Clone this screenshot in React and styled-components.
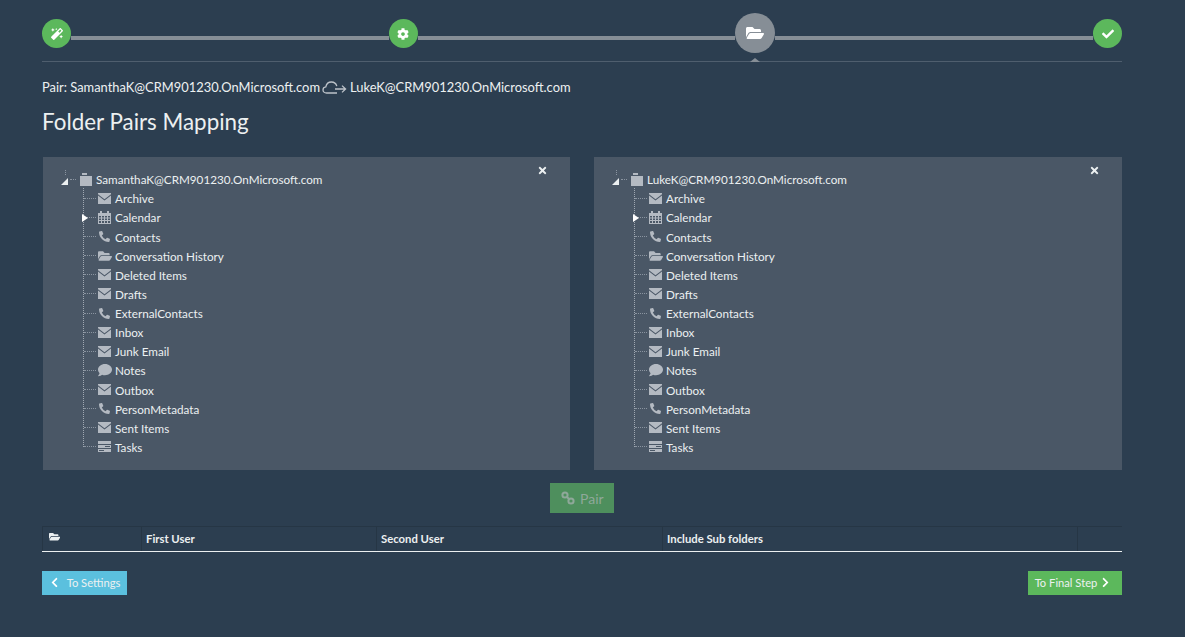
import styled, { createGlobalStyle } from "styled-components";
import {
  FaMagic,
  FaCog,
  FaFolderOpen,
  FaCheck,
  FaTimes,
  FaPhoneAlt,
  FaComment,
  FaChevronLeft,
  FaChevronRight,
} from "react-icons/fa";

const GlobalStyle = createGlobalStyle`
  html, body {
    margin: 0;
    padding: 0;
    background: #2c3e50;
    color: #ecf0f1;
    font-family: Lato, "Open Sans", sans-serif;
    font-size: 13px;
  }
`;

const Page = styled.div`
  width: 1080px;
  height: 637px;
  margin-left: 42px;
  overflow: hidden;
`;

const Wizard = styled.div`
  display: flex;
  align-items: flex-start;
  height: 48px;
  padding-top: 13px;
  border-bottom: 1px solid #4f5e6e;
`;

const Step = styled.div`
  width: ${(p) => (p.$active ? 40 : 29)}px;
  height: ${(p) => (p.$active ? 40 : 29)}px;
  margin-top: ${(p) => (p.$active ? 0 : 6)}px;
  flex-shrink: 0;
  border-radius: 50%;
  background: ${(p) => (p.$active ? "#868e96" : "#5cb85c")};
  color: #fff;
  font-size: ${(p) => (p.$active ? 18 : 12)}px;
  display: flex;
  align-items: center;
  justify-content: center;
  position: relative;

  ${(p) =>
    p.$active &&
    `
    &::after {
      content: "";
      position: absolute;
      left: 15px;
      top: 45px;
      border: 5px solid transparent;
      border-top: 0;
      border-bottom: 4px solid #868e96;
    }
  `}
`;

const Connector = styled.div`
  flex: 1;
  height: 4px;
  margin-top: 23px;
  background: #868e96;
`;

const PairLine = styled.div`
  display: flex;
  align-items: center;
  height: 20px;
  margin-top: 15px;
  font-size: 12.9px;
  color: #ecf0f1;
`;

const CloudIcon = styled.svg`
  width: 25px;
  height: 16px;
  margin: 2px 3px 0 2px;
`;

const Heading = styled.h2`
  margin: 12px 0 0;
  font-size: 22.4px;
  line-height: 26px;
  font-weight: 400;
  color: #ecf0f1;
`;

const Panels = styled.div`
  display: grid;
  grid-template-columns: 527px 528px;
  gap: 24px;
  margin: 22px 0 0 1px;
`;

const Panel = styled.div`
  height: 313px;
  box-sizing: border-box;
  padding: 12.7px 0 0 17px;
  background: #4a5766;
  position: relative;
`;

const CloseButton = styled.span`
  position: absolute;
  top: 8px;
  right: 22px;
  color: #ecf0f1;
  font-size: 11px;
`;

const RootRow = styled.div`
  display: flex;
  align-items: center;
  height: 19px;
  position: relative;
`;

const RootToggle = styled.span`
  width: 0;
  height: 0;
  margin: 4px 2px 0 1px;
  border-left: 7px solid transparent;
  border-bottom: 7px solid #ecf0f1;

  &::before {
    content: "";
    position: absolute;
    left: 5px;
    top: 0;
    height: 5px;
    border-left: 1px dotted #8a94a0;
  }
`;

const Dash = styled.span`
  width: ${(p) => p.$w}px;
  flex-shrink: 0;
  border-top: 1px dotted #8a94a0;
`;

const RootIcon = styled.span`
  display: flex;
  margin: 0 4px 0 3px;
`;

const List = styled.ul`
  list-style: none;
  margin: 0 0 0 23px;
  padding: 0;
  position: relative;

  &::before {
    content: "";
    position: absolute;
    left: 0;
    top: -1px;
    bottom: 9px;
    border-left: 1px dotted #a0a8b2;
  }
`;

const Row = styled.li`
  display: flex;
  align-items: center;
  height: 19.14px;
  padding-left: 1px;
  position: relative;
`;

const Expander = styled.span`
  position: absolute;
  left: -1px;
  top: 6px;
  border-left: 6px solid #fff;
  border-top: 4px solid transparent;
  border-bottom: 4px solid transparent;
`;

const RowIcon = styled.span`
  width: 15px;
  margin: 0 3px 0 1px;
  display: flex;
  justify-content: center;
  color: #b4bac2;
  font-size: ${(p) => p.$size || 13}px;
`;

const Label = styled.span`
  font-size: 11.7px;
  white-space: nowrap;
  color: #ecf0f1;
`;

const PairRow = styled.div`
  display: flex;
  justify-content: center;
  margin-top: 13px;
`;

const PairButton = styled.button`
  display: flex;
  align-items: center;
  gap: 5px;
  height: 30px;
  width: 64px;
  padding: 0 0 0 11px;
  border: 0;
  background: #4e8f5d;
  color: #8fa89a;
  font: 14px Lato, sans-serif;
`;

const Table = styled.table`
  width: 100%;
  margin-top: 13px;
  border-collapse: collapse;
  table-layout: fixed;
`;

const Th = styled.th`
  width: ${(p) => p.$w}px;
  height: 25px;
  padding: 0 0 2px ${(p) => p.$pad || 4}px;
  box-sizing: border-box;
  border: 1px solid #263645;
  border-bottom: 1px solid #ecf0f1;
  text-align: left;
  font-size: 11.3px;
  font-weight: 700;
  color: #ecf0f1;
`;

const Footer = styled.div`
  display: flex;
  justify-content: space-between;
  margin-top: 19px;
`;

const NavButton = styled.button`
  display: flex;
  align-items: center;
  justify-content: center;
  gap: ${(p) => p.$gap}px;
  height: 24px;
  padding: 0 ${(p) => p.$right || 0}px 2px 0;
  width: ${(p) => p.$w}px;
  border: 0;
  background: ${(p) => p.$bg};
  color: #ecf0f1;
  font: 11.2px Lato, sans-serif;

  svg {
    font-size: 11px;
    color: #fff;
  }
`;

// the panel icons are not in the packages in this shape, so they are drawn here
const EnvelopeIcon = () => (
  <svg width="13" height="11" viewBox="0 0 13 11" fill="currentColor">
    <path d="M0 0h13v1.2L6.5 6.2 0 1.2z" />
    <path d="M0 2.6l6.5 5 6.5-5V11H0z" />
  </svg>
);

const CalendarIcon = () => (
  <svg width="13" height="13" viewBox="0 0 13 13" fill="currentColor" fillRule="evenodd">
    <path d="M2 0h2v2h5V0h2v2h2v11H0V2h2zM1 5v1.5h2V5zm3 0v1.5h2V5zm3 0v1.5h2V5zm3 0v1.5h2V5zM1 7.5V9h2V7.5zm3 0V9h2V7.5zm3 0V9h2V7.5zm3 0V9h2V7.5zM1 10v2h2v-2zm3 0v2h2v-2zm3 0v2h2v-2zm3 0v2h2v-2z" />
  </svg>
);

const TasksIcon = () => (
  <svg width="13" height="11" viewBox="0 0 13 11" fill="currentColor" fillRule="evenodd">
    <path d="M0 0h13v3H0zM0 4h13v3H0zm7 1v1h5V5zM0 8h13v3H0zm1 1v1h5V9z" />
  </svg>
);

const FolderIcon = () => (
  <svg width="13" height="13" viewBox="0 0 13 13" fill="#b4bac2">
    <path d="M3 0h5v2H3z" />
    <path d="M1 3h12v10H1z" />
  </svg>
);

const ChainIcon = () => (
  <svg width="14" height="16" viewBox="0 0 14 16" fill="none" stroke="#8fa89a" strokeWidth="2">
    <circle cx="4" cy="5" r="2.6" />
    <circle cx="10" cy="11" r="2.6" />
    <path d="M6 7l2 2" />
  </svg>
);

const CloudArrow = () => (
  <CloudIcon viewBox="0 0 25 16" fill="none" stroke="#bcc2c9" strokeWidth="1.3">
    <path d="M15 13H4.5C2.5 13 1 11.6 1 9.9 1 8.3 2.2 7.1 3.8 6.9 4.4 4 6.6 2 9.4 2c2.6 0 4.7 1.6 5.4 4.1" />
    <path d="M13 9h10M20 5.6 23.6 9 20 12.4" />
  </CloudIcon>
);

const folders = [
  ["Archive", EnvelopeIcon],
  ["Calendar", CalendarIcon, true],
  ["Contacts", FaPhoneAlt],
  ["Conversation History", FaFolderOpen],
  ["Deleted Items", EnvelopeIcon],
  ["Drafts", EnvelopeIcon],
  ["ExternalContacts", FaPhoneAlt],
  ["Inbox", EnvelopeIcon],
  ["Junk Email", EnvelopeIcon],
  ["Notes", FaComment],
  ["Outbox", EnvelopeIcon],
  ["PersonMetadata", FaPhoneAlt],
  ["Sent Items", EnvelopeIcon],
  ["Tasks", TasksIcon],
];

function FolderTree({ user }) {
  return (
    <Panel>
      <CloseButton>
        <FaTimes />
      </CloseButton>
      <RootRow>
        <RootToggle />
        <Dash $w={6} />
        <RootIcon>
          <FolderIcon />
        </RootIcon>
        <Label>{user}</Label>
      </RootRow>
      <List>
        {folders.map(([name, Icon, expandable]) => (
          <Row key={name}>
            {expandable && <Expander />}
            <Dash $w={12} />
            <RowIcon $size={Icon === FaPhoneAlt ? 11 : 14}>
              <Icon />
            </RowIcon>
            <Label>{name}</Label>
          </Row>
        ))}
      </List>
    </Panel>
  );
}

export default function App() {
  return (
    <>
      <GlobalStyle />
      <Page>
        <Wizard>
          <Step><FaMagic /></Step>
          <Connector />
          <Step><FaCog /></Step>
          <Connector />
          <Step $active><FaFolderOpen /></Step>
          <Connector />
          <Step><FaCheck /></Step>
        </Wizard>

        <PairLine>
          Pair: SamanthaK@CRM901230.OnMicrosoft.com
          <CloudArrow />
          LukeK@CRM901230.OnMicrosoft.com
        </PairLine>
        <Heading>Folder Pairs Mapping</Heading>

        <Panels>
          <FolderTree user="SamanthaK@CRM901230.OnMicrosoft.com" />
          <FolderTree user="LukeK@CRM901230.OnMicrosoft.com" />
        </Panels>

        <PairRow>
          <PairButton disabled>
            <ChainIcon />
            Pair
          </PairButton>
        </PairRow>

        <Table>
          <thead>
            <tr>
              <Th $w={99} $pad={6}><FaFolderOpen /></Th>
              <Th $w={235}>First User</Th>
              <Th $w={286}>Second User</Th>
              <Th $w={415}>Include Sub folders</Th>
              <Th $w={45} />
            </tr>
          </thead>
        </Table>

        <Footer>
          <NavButton $w={85} $bg="#5bc0de" $gap={7}>
            <FaChevronLeft />
            To Settings
          </NavButton>
          <NavButton $w={94} $bg="#5cb85c" $gap={3} $right={4}>
            To Final Step
            <FaChevronRight />
          </NavButton>
        </Footer>
      </Page>
    </>
  );
}
